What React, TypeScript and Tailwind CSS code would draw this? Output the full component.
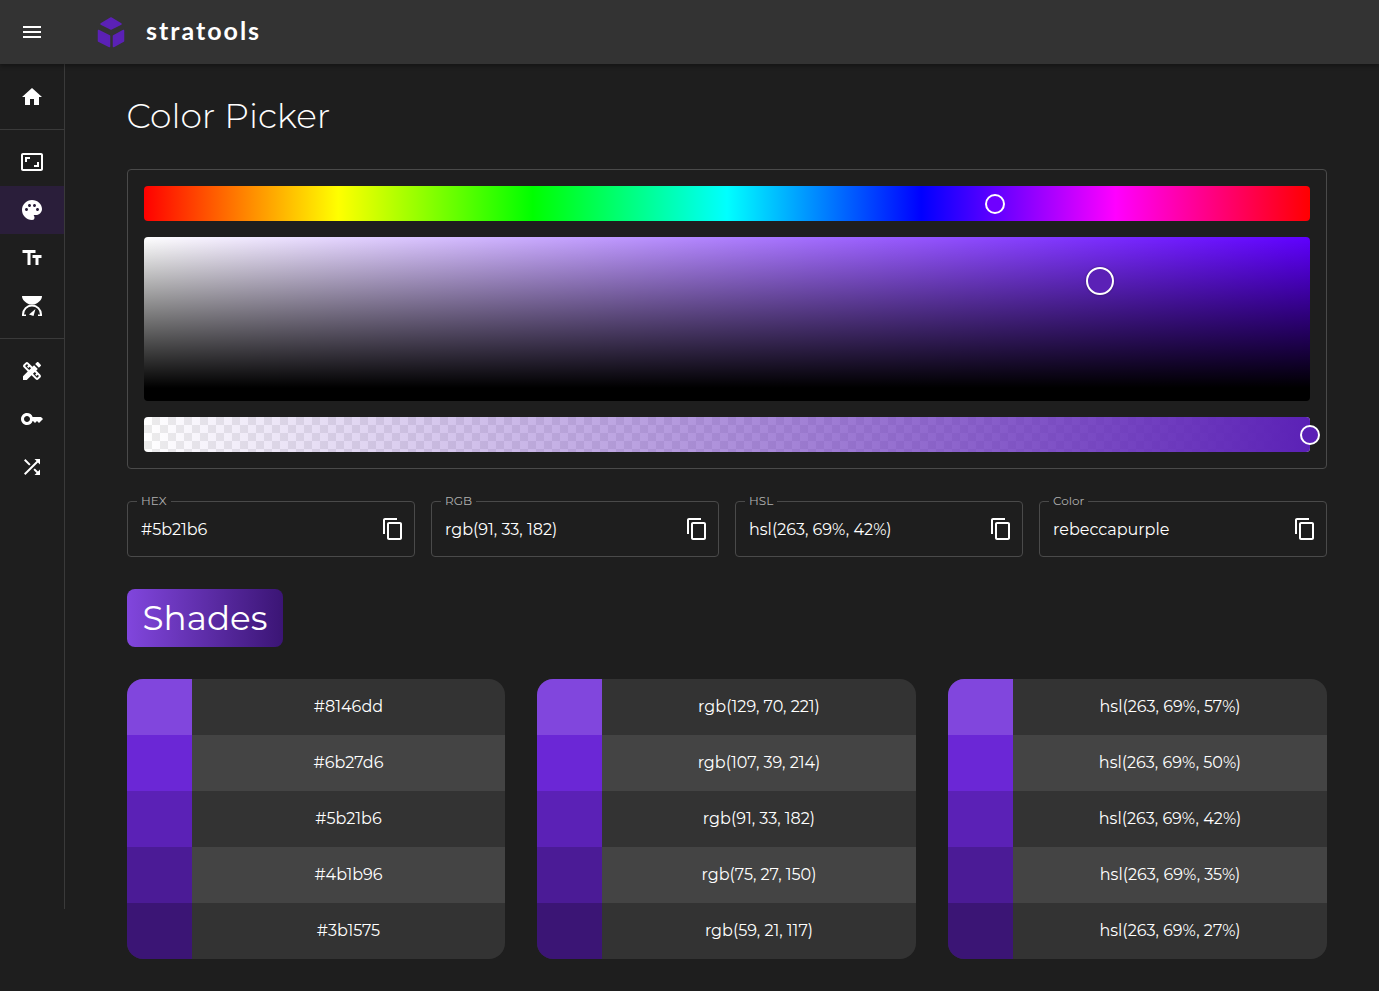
import React from "react";
import {
  MdAspectRatio,
  MdContentCopy,
  MdDesignServices,
  MdHome,
  MdKey,
  MdMenu,
  MdPalette,
  MdShuffle,
  MdTextFields,
} from "react-icons/md";

const shades = [
  { swatch: "bg-[#8146dd]", hex: "#8146dd", rgb: "rgb(129, 70, 221)", hsl: "hsl(263, 69%, 57%)" },
  { swatch: "bg-[#6b27d6]", hex: "#6b27d6", rgb: "rgb(107, 39, 214)", hsl: "hsl(263, 69%, 50%)" },
  { swatch: "bg-[#5b21b6]", hex: "#5b21b6", rgb: "rgb(91, 33, 182)", hsl: "hsl(263, 69%, 42%)" },
  { swatch: "bg-[#4b1b96]", hex: "#4b1b96", rgb: "rgb(75, 27, 150)", hsl: "hsl(263, 69%, 35%)" },
  { swatch: "bg-[#3b1575]", hex: "#3b1575", rgb: "rgb(59, 21, 117)", hsl: "hsl(263, 69%, 27%)" },
];

const fields = [
  { label: "HEX", value: "#5b21b6" },
  { label: "RGB", value: "rgb(91, 33, 182)" },
  { label: "HSL", value: "hsl(263, 69%, 42%)" },
  { label: "Color", value: "rebeccapurple" },
];

const Logo = () => (
  <svg viewBox="0 0 32 32" className="w-[32px] h-[32px]" fill="#5b21b6" stroke="#5b21b6" strokeWidth="1.5" strokeLinejoin="round">
    <path d="M16 2l10 6-10 5-10-5z" />
    <path d="M3.500 14.500l11 5.500v10.500l-11-5.500z" />
    <path d="M28.500 14.500l-10 5.500v10.500l10-5.500z" />
  </svg>
);

// hourglass over a gauge, no package has this one
const SpeedGlass = () => (
  <svg viewBox="0 0 24 24" className="w-[24px] h-[24px]" fill="none">
    <path d="M2 2h20c0 4-3.500 6.500-7.500 8.500h-5C5.500 8.500 2 6 2 2z" fill="white" />
    <path d="M3 22v-1.500a9 9 0 0 1 18 0V22" stroke="white" strokeWidth="2" />
    <path d="M2 20.500h4V22H2zM18 20.500h4V22h-4z" fill="white" />
    <path d="M9 20.500l6.500-5.500-2 7z" fill="white" />
  </svg>
);

const NavItem = ({ active, children }: { active?: boolean; children: React.ReactNode }) => (
  <div className={`h-[48px] flex items-center justify-center text-white ${active ? "bg-[#2a1e3a]" : ""}`}>
    {children}
  </div>
);

const Thumb = ({ className }: { className: string }) => (
  <div className={`absolute rounded-full border-2 border-white ${className}`} />
);

const ShadeTable = ({ column }: { column: "hex" | "rgb" | "hsl" }) => (
  <div className="rounded-[16px] overflow-hidden">
    {shades.map((s, i) => (
      <div key={s.hex} className={`flex h-[56px] ${i % 2 === 1 ? "bg-[#444444]" : "bg-[#333333]"}`}>
        <div className={`w-[65px] shrink-0 ${s.swatch}`} />
        <div className="flex-1 flex items-center justify-center text-[16px] text-white">{s[column]}</div>
      </div>
    ))}
  </div>
);

export default function App() {
  return (
    <div className="min-h-[991px] bg-[#1e1e1e] text-white font-['Montserrat','Inter',sans-serif]">
      <header className="h-[64px] bg-[#333333] flex items-center shadow-[0_2px_4px_rgba(0,0,0,0.35)] relative">
        <div className="w-[64px] flex justify-center">
          <MdMenu size={24} />
        </div>
        <div className="ml-[31px]">
          <Logo />
        </div>
        <span className="ml-[19px] mb-[3px] font-['Lato',sans-serif] font-bold text-[25px] tracking-[2px]">stratools</span>
      </header>

      <div className="flex items-start">
        <nav className="w-[65px] h-[845px] shrink-0 border-r border-[#3a3a3a]">
          <div className="pt-[8px] pb-[9px]">
            <NavItem><MdHome size={24} className="translate-y-px" /></NavItem>
          </div>
          <div className="h-px bg-[#3a3a3a]" />
          <div className="py-[8px]">
            <NavItem><MdAspectRatio size={24} /></NavItem>
            <NavItem active><MdPalette size={24} /></NavItem>
            <NavItem><MdTextFields size={24} /></NavItem>
            <NavItem><SpeedGlass /></NavItem>
          </div>
          <div className="h-px bg-[#3a3a3a]" />
          <div className="py-[8px]">
            <NavItem><MdDesignServices size={24} /></NavItem>
            <NavItem><MdKey size={24} /></NavItem>
            <NavItem><MdShuffle size={24} /></NavItem>
          </div>
        </nav>

        <main className="ml-[62px] w-[1200px] pt-[30px]">
          <h1 className="text-[34.5px] leading-[44px] font-light h-[44px] -ml-[0.5px]">Color Picker</h1>

          <section className="mt-[31px] border border-[#4a4a4a] rounded-[4px] p-[16px] flex flex-col gap-[16px] h-[300px]">
            <div className="relative h-[35px] rounded-[4px] bg-[linear-gradient(to_right,#f00,#ff0,#0f0,#0ff,#00f,#f0f,#f00)]">
              <Thumb className="left-[841px] top-[8px] w-[20px] h-[20px] bg-[#6f00ff]" />
            </div>
            <div className="relative h-[164px] rounded-[4px] bg-[linear-gradient(to_top,#000_8%,transparent),linear-gradient(to_right,#fff,#5f00ff)]">
              <Thumb className="left-[942px] top-[30px] w-[28px] h-[28px] bg-[#5b21b6] shadow-[0_0_2px_rgba(0,0,0,0.5)]" />
            </div>
            <div className="relative h-[35px] rounded-[4px] bg-[repeating-conic-gradient(#ececec_0_25%,#ffffff_0_50%)] bg-[length:16px_16px]">
              <div className="h-full rounded-[4px] bg-[linear-gradient(to_right,rgba(91,33,182,0),#5b21b6)]" />
              <Thumb className="left-[1156px] top-[8px] w-[20px] h-[20px] bg-[#5b21b6]" />
            </div>
          </section>

          <section className="mt-[32px] grid grid-cols-4 gap-[16px]">
            {fields.map((f) => (
              <div key={f.label} className="relative h-[56px] border border-[#4a4a4a] rounded-[4px] flex items-center justify-between pl-[13px] pr-[9px]">
                <span className="absolute left-[8px] top-[-8px] bg-[#1e1e1e] px-[4px] ml-px text-[12px] leading-[14px] text-[#b0b0b0]">{f.label}</span>
                <span className="text-[16px] pt-px">{f.value}</span>
                <MdContentCopy size={24} />
              </div>
            ))}
          </section>

          <div className="mt-[32px] w-[156px] h-[58px] rounded-[8px] flex items-center justify-center text-[34.2px] leading-[51px] bg-[linear-gradient(to_right,#8146dd,#3b1575)]">
            Shades
          </div>

          <section className="mt-[32px] grid grid-cols-[378px_379px_379px] gap-[32px]">
            <ShadeTable column="hex" />
            <ShadeTable column="rgb" />
            <ShadeTable column="hsl" />
          </section>
        </main>
      </div>
    </div>
  );
}
